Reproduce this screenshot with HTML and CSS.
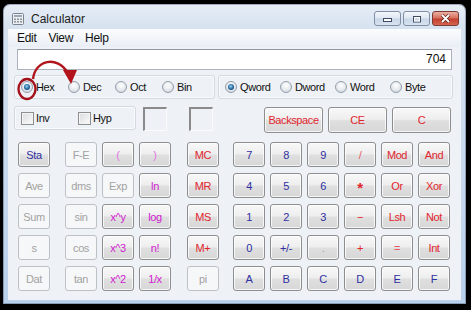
FILE: index.html
```html
<!DOCTYPE html>
<html lang="en">
<head>
    <meta charset="UTF-8">
    <title>Calculator</title>
    <link rel="stylesheet" href="styles.css">
</head>
<body>
    <div class="window">
        <div class="titlebar">
            <svg class="app-icon" width="12" height="12" viewBox="0 0 12 12">
                <rect x="0.5" y="0.5" width="11" height="11" rx="1" fill="#eceef1" stroke="#7d848d"/>
                <rect x="2" y="2" width="8" height="2" fill="#9aa7b8"/>
                <rect x="2" y="5.5" width="2" height="1.5" fill="#8a929c"/>
                <rect x="5" y="5.5" width="2" height="1.5" fill="#8a929c"/>
                <rect x="8" y="5.5" width="2" height="1.5" fill="#8a929c"/>
                <rect x="2" y="8" width="2" height="1.5" fill="#8a929c"/>
                <rect x="5" y="8" width="2" height="1.5" fill="#8a929c"/>
                <rect x="8" y="8" width="2" height="1.5" fill="#8a929c"/>
            </svg>
            <span class="title">Calculator</span>
            <div class="controls">
                <div class="ctl">
                    <svg width="11" height="6" viewBox="0 0 11 6"><rect x="1.5" y="2.5" width="8" height="3" fill="#fff" stroke="#3d4c60"/></svg>
                </div>
                <div class="ctl">
                    <svg width="10" height="8" viewBox="0 0 10 8"><rect x="1.5" y="1.5" width="7" height="5.5" fill="none" stroke="#3d4c60" stroke-width="1"/><rect x="2.5" y="2.5" width="5" height="3.5" fill="none" stroke="#fff" stroke-width="1"/></svg>
                </div>
                <div class="ctl close">
                    <svg width="11" height="9" viewBox="0 0 11 9"><path d="M2 1 L9 8 M9 1 L2 8" stroke="#5a1e18" stroke-width="3.2"/><path d="M2 1 L9 8 M9 1 L2 8" stroke="#fff" stroke-width="1.8"/></svg>
                </div>
            </div>
        </div>

        <div class="client">
            <div class="menubar">
                <span>Edit</span>
                <span>View</span>
                <span>Help</span>
            </div>

            <div class="panel">
                <div class="display">704</div>

                <div class="radio-row">
                    <div class="group base">
                        <label class="opt"><span class="radio on"></span>Hex</label>
                        <label class="opt"><span class="radio"></span>Dec</label>
                        <label class="opt"><span class="radio"></span>Oct</label>
                        <label class="opt"><span class="radio"></span>Bin</label>
                    </div>
                    <div class="group size">
                        <label class="opt"><span class="radio on"></span>Qword</label>
                        <label class="opt"><span class="radio"></span>Dword</label>
                        <label class="opt"><span class="radio"></span>Word</label>
                        <label class="opt"><span class="radio"></span>Byte</label>
                    </div>
                </div>

                <div class="check-row">
                    <div class="group checks">
                        <label class="chk"><span class="box"></span>Inv</label>
                        <label class="chk"><span class="box"></span>Hyp</label>
                    </div>
                    <div class="slot"></div>
                    <div class="slot second"></div>
                    <div class="edit-keys">
                        <button class="key wide red">Backspace</button>
                        <button class="key wide red">CE</button>
                        <button class="key wide red">C</button>
                    </div>
                </div>

                <div class="keypad">
                    <div class="keys cols1">
                        <button class="key blue">Sta</button>
                        <button class="key off">Ave</button>
                        <button class="key off">Sum</button>
                        <button class="key off">s</button>
                        <button class="key off">Dat</button>
                    </div>
                    <div class="keys cols3">
                        <button class="key off">F-E</button>
                        <button class="key pink light">(</button>
                        <button class="key pink light">)</button>
                        <button class="key off">dms</button>
                        <button class="key off">Exp</button>
                        <button class="key pink">ln</button>
                        <button class="key off">sin</button>
                        <button class="key pink">x^y</button>
                        <button class="key pink">log</button>
                        <button class="key off">cos</button>
                        <button class="key pink">x^3</button>
                        <button class="key pink">n!</button>
                        <button class="key off">tan</button>
                        <button class="key pink">x^2</button>
                        <button class="key pink">1/x</button>
                    </div>
                    <div class="keys cols1 mem">
                        <button class="key red">MC</button>
                        <button class="key red">MR</button>
                        <button class="key red">MS</button>
                        <button class="key red">M+</button>
                        <button class="key off">pi</button>
                    </div>
                    <div class="keys cols6">
                        <button class="key blue">7</button>
                        <button class="key blue">8</button>
                        <button class="key blue">9</button>
                        <button class="key red light">/</button>
                        <button class="key red">Mod</button>
                        <button class="key red">And</button>
                        <button class="key blue">4</button>
                        <button class="key blue">5</button>
                        <button class="key blue">6</button>
                        <button class="key red star">*</button>
                        <button class="key red">Or</button>
                        <button class="key red">Xor</button>
                        <button class="key blue">1</button>
                        <button class="key blue">2</button>
                        <button class="key blue">3</button>
                        <button class="key red">&minus;</button>
                        <button class="key red">Lsh</button>
                        <button class="key red">Not</button>
                        <button class="key blue">0</button>
                        <button class="key blue">+/-</button>
                        <button class="key dim">.</button>
                        <button class="key red">+</button>
                        <button class="key red light">=</button>
                        <button class="key red">Int</button>
                        <button class="key blue">A</button>
                        <button class="key blue">B</button>
                        <button class="key blue">C</button>
                        <button class="key blue">D</button>
                        <button class="key blue">E</button>
                        <button class="key blue">F</button>
                    </div>
                </div>
            </div>
        </div>
    </div>

    <!-- red annotation drawn over the window -->
    <svg class="annot" width="471" height="310" viewBox="0 0 471 310">
        <ellipse cx="27" cy="89" rx="8.5" ry="10" fill="none" stroke="#a3121b" stroke-width="2.4"/>
        <path d="M33 79 C35 60, 57 55, 68 73" fill="none" stroke="#b0161e" stroke-width="2.4"/>
        <polygon points="63,70 77,70 71,84" fill="#b3141c"/>
    </svg>
</body>
</html>
```

FILE: styles.css
```css
* {
    box-sizing: border-box;
}
body {
    margin: 0;
    width: 471px;
    height: 310px;
    overflow: hidden;
    background: #000;
    font-family: "Liberation Sans", Arial, sans-serif;
}
.window {
    width: 463px;
    height: 300px;
    margin: 4px 0 0 3px;
    padding: 0 5px 4px;
    border-radius: 7px 7px 0 0;
    background: linear-gradient(#e6edf6 0, #d6e2f0 25px, #b9d0eb 100%);
    box-shadow: inset 0 0 0 1px rgba(70, 90, 120, 0.45);
}
.titlebar {
    display: flex;
    align-items: flex-start;
    height: 25px;
}
.app-icon {
    margin: 9px 0 0 4px;
}
.title {
    margin: 8px 0 0 7px;
    font-size: 12px;
    line-height: 14px;
    color: #1b1b1b;
}
.controls {
    display: flex;
    gap: 2px;
    margin: 7px 2px 0 auto;
}
.ctl {
    width: 27px;
    height: 15px;
    border: 1px solid #7f90a6;
    border-radius: 3px;
    background: linear-gradient(#f3f7fb, #dfe8f2 45%, #c8d6e7 55%, #d8e3f0);
    display: flex;
    align-items: center;
    justify-content: center;
}
.ctl.close {
    border-color: #7c3b32;
    background: linear-gradient(#eab0a3, #d8715f 45%, #c3402f 55%, #d4664f);
}
.client {
    height: 271px;
    background: #eef1f5;
}
.menubar {
    display: flex;
    align-items: center;
    gap: 12px;
    height: 18px;
    padding-left: 9px;
    font-size: 12px;
    letter-spacing: -0.3px;
    color: #111;
    background: linear-gradient(#fbfcfe, #e9eef6);
}
.panel {
    padding: 2px 8px 0 6px;
    font-size: 11px;
    letter-spacing: -0.4px;
    color: #111;
}
.display {
    height: 21px;
    margin-left: 3px;
    margin-right: 1px;
    padding-right: 5px;
    border: 1px solid #abb2bb;
    border-top-color: #8f98a3;
    background: #fff;
    font-size: 12px;
    letter-spacing: 0;
    line-height: 19px;
    text-align: right;
}
.radio-row {
    display: flex;
    gap: 3px;
    margin-top: 5px;
}
.group {
    display: flex;
    align-items: center;
    height: 24px;
    padding-left: 6px;
    border: 1px solid #d2dae3;
    border-radius: 3px;
    box-shadow: inset 0 0 0 1px #fafbfd;
}
.base {
    width: 201px;
}
.size {
    width: 235px;
}
.opt {
    display: flex;
    align-items: center;
    gap: 3px;
    width: 47px;
}
.size .opt {
    width: 55px;
}
.radio {
    flex: none;
    display: flex;
    align-items: center;
    justify-content: center;
    width: 12px;
    height: 12px;
    border: 1px solid #939eab;
    border-radius: 50%;
    background: radial-gradient(circle at 50% 35%, #ffffff, #e3e7eb 60%, #c9d0d8);
}
.radio.on::after {
    content: "";
    width: 6px;
    height: 6px;
    border-radius: 50%;
    background: radial-gradient(circle at 45% 40%, #9ad6f2, #1e6399 55%, #123f66);
}
.check-row {
    display: flex;
    align-items: flex-start;
    height: 27px;
    margin-top: 7px;
}
.checks {
    width: 122px;
}
.chk {
    display: flex;
    align-items: center;
    gap: 2px;
    width: 60px;
}
.box {
    width: 13px;
    height: 13px;
    border: 1px solid #8e8f90;
    background: linear-gradient(135deg, #d9dcdf, #fbfbfb);
    box-shadow: inset 0 0 0 1px #f4f4f4;
}
.slot {
    width: 24px;
    height: 24px;
    margin: 1px 0 0 7px;
    border-style: solid;
    border-width: 2px 1px 1px 2px;
    border-color: #8a8a8a #fbfbfb #fbfbfb #8a8a8a;
}
.slot.second {
    margin-left: 22px;
}
.edit-keys {
    display: flex;
    gap: 5px;
    margin: 1px 0 0 51px;
}
.keypad {
    display: flex;
    margin: 9px 0 0 4px;
}
.keys {
    display: grid;
    grid-auto-rows: 25px;
    row-gap: 6px;
    column-gap: 5px;
}
.cols1 {
    grid-template-columns: 32px;
}
.cols3 {
    grid-template-columns: repeat(3, 32px);
    margin-left: 15px;
}
.mem {
    margin-left: 16px;
}
.cols6 {
    grid-template-columns: repeat(6, 32px);
    margin-left: 14px;
}
.key {
    width: 32px;
    height: 25px;
    padding: 0;
    border: 1px solid #8c8e90;
    border-radius: 3px;
    background: linear-gradient(#f8f8f8, #eeeeee 47%, #dfdfdf 53%, #d7d7d7);
    box-shadow: inset 0 0 0 1px rgba(255, 255, 255, 0.75);
    font: 11px "Liberation Sans", Arial, sans-serif;
    letter-spacing: -0.4px;
    color: #2f2fa2;
}
.key.wide {
    width: 59px;
    height: 26px;
}
.blue {
    color: #2f2fa2;
}
.red {
    color: #e1252d;
}
.red.light {
    color: #e85a60;
}
.pink {
    color: #d021cf;
}
.pink.light {
    color: #e075df;
}
.dim {
    color: #9a9a9a;
}
.star {
    font-size: 15px;
    font-weight: bold;
    padding-top: 4px;
}
.key.off {
    border-color: #bdc1c5;
    background: #f6f7f8;
    box-shadow: none;
    color: #a2a2a2;
}
.annot {
    position: absolute;
    left: 0;
    top: 0;
    pointer-events: none;
}
```
